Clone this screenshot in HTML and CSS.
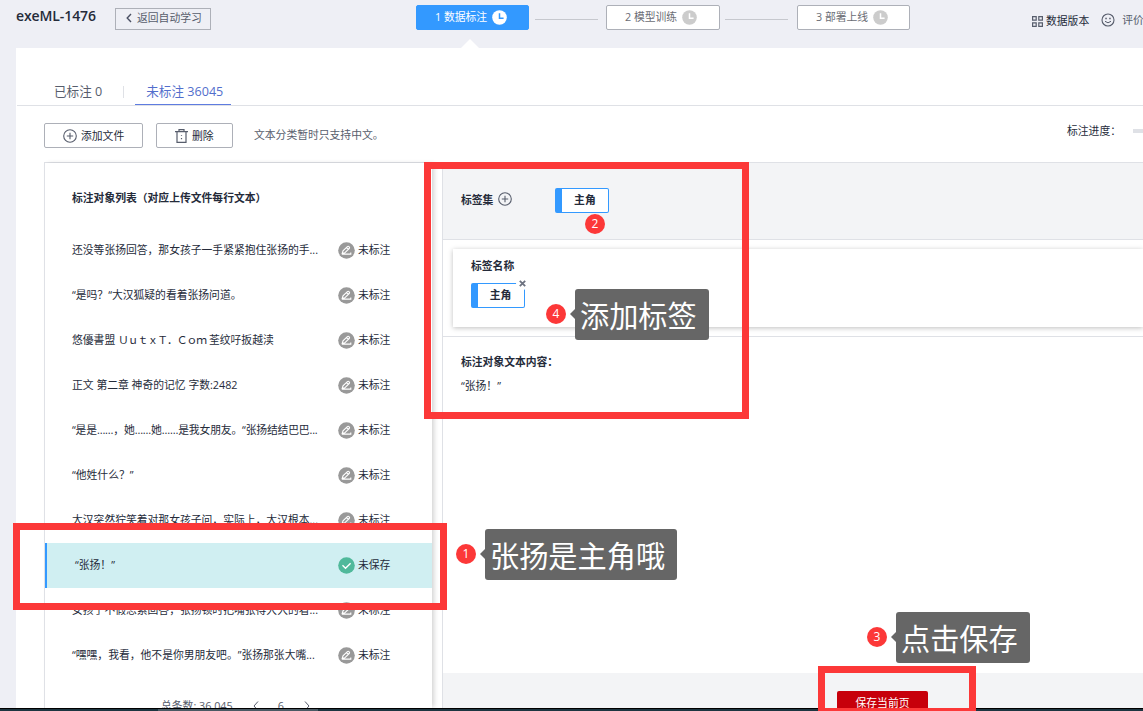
FILE: index.html
```
<!DOCTYPE html>
<html lang="zh-CN">
<head>
<meta charset="utf-8">
<title>exeML-1476</title>
<link rel="stylesheet" href="styles.css">
</head>
<body>
<svg class="defs" width="0" height="0">
  <symbol id="clock" viewBox="0 0 15 15"><circle cx="7.5" cy="7.5" r="7.3" fill="currentColor"/><path class="hands" d="M7.5 3.2V8.2H11.6" fill="none" stroke-width="1.5"/></symbol>
  <symbol id="plus" viewBox="0 0 14 14"><g fill="none" stroke="currentColor" stroke-width="1.1"><circle cx="7" cy="7" r="6.3"/><path d="M7 3.8v6.4M3.8 7h6.4"/></g></symbol>
  <symbol id="pen" viewBox="0 0 17 17"><circle cx="8.5" cy="8.5" r="8.3" fill="#999"/><path d="M4.2 11.4L5 8.9L9.4 4.6Q10.3 3.9 11.2 4.8Q12 5.7 11.2 6.5L6.8 10.8ZM4 12.1H12.8L12.8 10.6M8.5 5.6L10.2 7.3" fill="none" stroke="#fff" stroke-width="1.1"/></symbol>
  <symbol id="ok" viewBox="0 0 17 17"><circle cx="8.5" cy="8.5" r="8.3" fill="#50b99b"/><path d="M4.5 8.3L7.5 11.2L12.6 6.2" fill="none" stroke="#fff" stroke-width="1.4"/></symbol>
</svg>
<header class="top">
  <h1 class="title">exeML-1476</h1>
  <button class="back"><svg width="6" height="10" viewBox="0 0 6 10"><path d="M5 1L1.2 5L5 9" fill="none" stroke="#4a5064" stroke-width="1.4"/></svg>返回自动学习</button>
  <nav class="steps">
    <span class="step current">1 数据标注<svg width="15" height="15"><use href="#clock"/></svg></span>
    <i class="link"></i>
    <span class="step second">2 模型训练<svg width="15" height="15"><use href="#clock"/></svg></span>
    <i class="link"></i>
    <span class="step third">3 部署上线<svg width="15" height="15"><use href="#clock"/></svg></span>
  </nav>
  <a class="version"><svg width="11" height="11" viewBox="0 0 11 11"><path d="M.6.6h3.6v3.6H.6zM6.8.6h3.6v3.6H6.8zM.6 6.8h3.6v3.6H.6zM6.8 6.8h3.6v3.6H6.8z" fill="none" stroke="#575d6c" stroke-width="1.2"/></svg>数据版本</a>
  <a class="rate"><svg width="14" height="14" viewBox="0 0 14 14"><circle cx="7" cy="7" r="6" fill="none" stroke="#575d6c" stroke-width="1.1"/><path d="M4 8.3Q7 11.3 10 8.3" fill="none" stroke="#575d6c"/><path d="M4.3 4.8h1.5v1.4H4.3zM8.2 4.8h1.5v1.4H8.2z" fill="#575d6c"/></svg>评价</a>
</header>
<main class="main">
  <div class="tabs">
    <span class="tab">已标注 0</span><i class="divider"></i><span class="tab active">未标注 36045</span>
  </div>
  <div class="toolbar">
    <button class="btn add"><svg width="14" height="14"><use href="#plus"/></svg>添加文件</button>
    <button class="btn del"><svg width="13" height="14" viewBox="0 0 13 14"><path d="M0 2.6H13M4 2.4V.7H9V2.4M2 3V13.3H11V3M6.5 6V6.8M6.5 9V10.2" fill="none" stroke="#575d6c" stroke-width="1.2"/></svg>删除</button>
    <span class="hint">文本分类暂时只支持中文。</span>
    <span class="progress-label">标注进度：</span>
    <span class="progress"></span>
  </div>
  <div class="workspace">
    <section class="list">
      <h2 class="list-title">标注对象列表（对应上传文件每行文本）</h2>
      <div class="row"><span class="text">还没等张扬回答，那女孩子一手紧紧抱住张扬的手...</span><svg width="17" height="17"><use href="#pen"/></svg><span>未标注</span></div>
      <div class="row"><span class="text">“是吗？“大汉狐疑的看着张扬问道。</span><svg width="17" height="17"><use href="#pen"/></svg><span>未标注</span></div>
      <div class="row"><span class="text">悠優書盟 <span class="latin">ＵｕｔｘＴ．Ｃｏｍ</span> 荃纹吇扳越渎</span><svg width="17" height="17"><use href="#pen"/></svg><span>未标注</span></div>
      <div class="row"><span class="text">正文 第二章 神奇的记忆 字数:2482</span><svg width="17" height="17"><use href="#pen"/></svg><span>未标注</span></div>
      <div class="row"><span class="text tight">“是是……，她……她……是我女朋友。“张扬结结巴巴...</span><svg width="17" height="17"><use href="#pen"/></svg><span>未标注</span></div>
      <div class="row"><span class="text">“他姓什么？”</span><svg width="17" height="17"><use href="#pen"/></svg><span>未标注</span></div>
      <div class="row"><span class="text">大汉突然狞笑着对那女孩子问，实际上，大汉根本...</span><svg width="17" height="17"><use href="#pen"/></svg><span>未标注</span></div>
      <div class="row selected"><span class="text">“张扬！”</span><svg width="17" height="17"><use href="#ok"/></svg><span>未保存</span></div>
      <div class="row"><span class="text">女孩子不假思索回答，张扬顿时把嘴张得大大的看...</span><svg width="17" height="17"><use href="#pen"/></svg><span>未标注</span></div>
      <div class="row"><span class="text">“嘿嘿，我看，他不是你男朋友吧。”张扬那张大嘴...</span><svg width="17" height="17"><use href="#pen"/></svg><span>未标注</span></div>
      <div class="pager"><span class="total">总条数: 36,045</span><svg width="6" height="10" viewBox="0 0 6 10"><path d="M5 .5L1 5L5 9.5" fill="none" stroke="#575d6c"/></svg><span>6</span><svg width="6" height="10" viewBox="0 0 6 10"><path d="M1 .5L5 5L1 9.5" fill="none" stroke="#575d6c"/></svg></div>
    </section>
    <section class="detail">
      <div class="labelset"><b>标签集</b><svg width="14" height="14"><use href="#plus"/></svg><span class="tag">主角</span></div>
      <div class="card-area">
        <div class="card"><b>标签名称</b><span class="tag">主角<i class="close"><svg width="7" height="7" viewBox="0 0 7 7"><path d="M.8.8L6.2 6.2M6.2.8L.8 6.2" stroke="#6d7280" stroke-width="1.8"/></svg></i></span></div>
      </div>
      <div class="content"><b>标注对象文本内容：</b><p>“张扬！”</p></div>
      <footer class="save-bar"><button class="save">保存当前页</button></footer>
    </section>
  </div>
</main>
<div class="taskbar"><i></i></div>

<div class="frame frame-row"></div>
<div class="frame frame-label"></div>
<div class="frame frame-save"></div>
<span class="num num-1">1</span><span class="tip tip-1">张扬是主角哦</span>
<span class="num num-2">2</span>
<span class="num num-3">3</span><span class="tip tip-3">点击保存</span>
<span class="num num-4">4</span><span class="tip tip-4">添加标签</span>
</body>
</html>
```
FILE: styles.css
```
* { box-sizing: border-box; }
body {
  margin: 0; width: 1143px; height: 711px; overflow: hidden; position: relative;
  display: flex; flex-direction: column; background: #eeeff5;
  font: 10.8px/16px "Open Sans", "Noto Sans CJK SC", sans-serif; color: #252b3a; white-space: nowrap;
  text-spacing-trim: space-all;
}
svg { flex: none; }
button { font: inherit; color: inherit; padding: 0; display: flex; align-items: center; }
h1, h2, p { margin: 0; }
.defs { position: absolute; }

.top { height: 48px; flex: none; display: flex; align-items: flex-start; padding-left: 16px; }
.title, .back, .steps, .step, .link, .version, .rate { flex-shrink: 0; }
.title { width: 99px; font-size: 14px; line-height: 20px; font-weight: 600; letter-spacing: -.1px; padding-top: 6px; }
.back { width: 96px; height: 22px; margin-top: 8px; border: 1px solid #adb0b8; background: transparent; padding: 0 0 2px 10px; gap: 5px; color: #575d6c; }
.steps { display: flex; align-items: flex-start; margin: 5px 0 0 205px; }
.step { position: relative; width: 114px; height: 25px; padding: 0 0 1px 18px; display: flex; align-items: center; gap: 5px; border: 1px solid #adb0b8; border-radius: 2px; background: #fff; color: #6b6d75; }
.step svg { color: #ccc; margin-top: 1px; }
.step.current { width: 113px; background: #39f; border-color: #39f; color: #fff; --hand: #39f; }
.step.current svg { color: #fff; }
.hands { stroke: var(--hand, #fff); }
.step.current::after { content: ""; position: absolute; left: 44px; top: 33px; border: 9px solid transparent; border-top: 0; border-bottom-color: #fff; }
.step.third { width: 113px; }
.link { width: 63px; height: 1px; background: #c6c8ce; margin: 14px 8px 0 6px; }
.step.second + .link { margin: 14px 9px 0 5px; }
.version { display: flex; align-items: center; gap: 3px; margin: 13px 0 0 122px; }
.rate { display: flex; align-items: center; gap: 7px; margin: 12px 0 0 12px; color: #575d6c; }

.main { height: 660px; flex: none; margin-left: 16px; background: #fff; display: flex; flex-direction: column; overflow: hidden; }
.tabs { height: 58px; flex: none; margin-left: 1px; border-bottom: 1px solid #dfe1e6; display: flex; padding-left: 37px; font-size: 12.6px; line-height: 18px; color: #575d6c; }
.tab { padding-top: 35px; }
.divider { width: 1px; height: 12px; background: #dfe1e6; margin: 38px 11px 0 21px; }
.tab.active { width: 96px; height: 57px; text-align: center; color: #526ecc; border-bottom: 1px solid #5e7ce0; padding-left: 3px; }
.toolbar { height: 56px; flex: none; padding: 17px 0 0 28px; display: flex; align-items: flex-start; }
.btn { height: 25px; border: 1px solid #adb0b8; border-radius: 2px; background: #fff; gap: 4px; }
.btn svg { color: #575d6c; }
.add { width: 99px; padding-left: 18px; }
.del { width: 77px; margin-left: 13px; padding-left: 18px; }
.hint { margin: 4px 0 0 21px; color: #575d6c; }
.progress-label { margin-left: auto; margin-right: 12px; }
.progress { width: 10px; height: 4px; background: #dfe1e6; margin-top: 6px; }

.workspace { flex: 1; min-height: 0; margin-left: 28px; display: flex; gap: 10px; border-top: 1px solid #dfe1e6; }
.list { width: 388px; height: 545px; border-left: 1px solid #dfe1e6; box-shadow: 3px 0 5px -1px rgba(0,0,0,.18); }
.list-title { height: 65px; padding: 27px 0 0 27px; font-size: 10.8px; line-height: 16px; font-weight: 700; }
.row { height: 45px; display: flex; align-items: center; gap: 4px; padding: 0 0 1px 27px; }
.text { width: 262px; }
.tight { letter-spacing: -.16px; }
.latin { letter-spacing: -1px; }
.row svg { margin: 1px -1px 0 0; }
.row.selected { background: #d0eff2; border-left: 2px solid #39f; padding-left: 28px; }
.row.selected .text { width: 259px; }
.pager { display: flex; align-items: center; padding: 19px 0 0 116px; color: #575d6c; line-height: 18px; }
.total { margin-right: 20px; }
.pager span + svg + span { margin: 0 20px 0 19px; }

.detail { flex: 1; border-left: 1px solid #dfe1e6; display: flex; flex-direction: column; }
.labelset { height: 77px; flex: none; background: #f3f4f6; border-bottom: 1px solid #dfe1e6; display: flex; align-items: center; padding: 0 0 2px 18px; }
.labelset svg { margin: 0 43px 2px 5px; color: #575d6c; }
.tag { position: relative; width: 54px; height: 25px; border: 1px solid #39f; border-left-width: 7px; border-radius: 2px; background: #fff; display: flex; align-items: center; justify-content: center; padding: 0 1px 1px 0; font-weight: 700; }
.card-area { height: 97px; flex: none; padding: 9px 0 9px 10px; border-bottom: 1px solid #dfe1e6; }
.card { height: 78px; padding: 9px 0 0 18px; display: flex; flex-direction: column; gap: 9px; background: #fff; box-shadow: 0 1px 5px rgba(0,0,0,.25); }
.close { position: absolute; right: -5px; top: -7px; width: 13px; height: 13px; border-radius: 50%; background: #fff; display: flex; align-items: center; justify-content: center; }
.content { flex: 1; padding: 17px 0 0 18px; }
.content p { margin-top: 8px; }
.save-bar { height: 35px; flex: none; background: #f3f4f6; padding: 18px 0 0 394px; }
.save { width: 91px; height: 25px; border: 0; border-radius: 2px; background: #c7000b; color: #fff; justify-content: center; padding-bottom: 1px; }

.taskbar { height: 3px; flex: none; background: #1d3540; border-top: 1px solid #000; }
.taskbar i { display: block; width: 160px; height: 2px; margin-left: 158px; background: #4a5a64; }

/* Guide marks drawn over the console */
.frame { position: absolute; border: 7px solid #fc3838; }
.frame-row { left: 13px; top: 523px; width: 434px; height: 87px; }
.frame-label { left: 424px; top: 162px; width: 325px; height: 257px; }
.frame-save { left: 818px; top: 666px; width: 158px; height: 49px; }
.num { position: absolute; width: 20px; height: 20px; border-radius: 50%; background: #fc3838; color: #fff; text-align: center; font: 12px/20px "Open Sans", sans-serif; }
.num-1 { left: 456px; top: 544px; }
.num-2 { left: 585px; top: 214px; }
.num-3 { left: 867px; top: 627px; }
.num-4 { left: 546px; top: 304px; }
.tip { position: absolute; height: 51px; padding-left: 5px; border-radius: 3px; background: #666; color: #fff; font: 29.2px/51px "Noto Sans CJK SC", sans-serif; }
.tip::before { content: ""; position: absolute; left: -5px; top: 20px; border: 5px solid transparent; border-left: 0; border-right-color: #666; }
.tip-1 { left: 485px; top: 529px; width: 192px; }
.tip-3 { left: 896px; top: 612px; width: 134px; }
.tip-4 { left: 575px; top: 289px; width: 134px; }
```
